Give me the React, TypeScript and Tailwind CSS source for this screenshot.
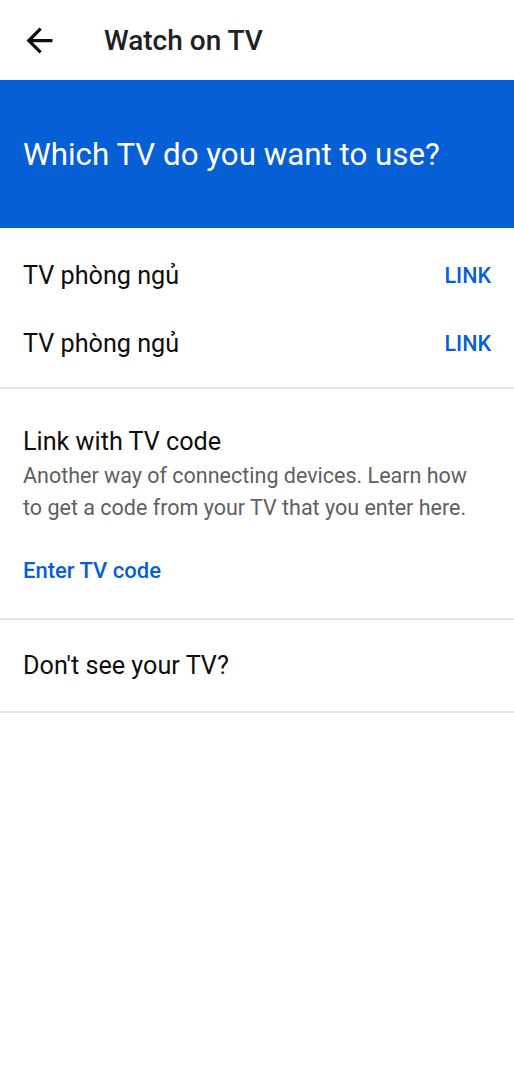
const tvs = ["TV phòng ngủ", "TV phòng ngủ"];

export default function App() {
  return (
    <div className="min-h-[1080px] bg-white font-['Roboto',sans-serif] text-[#0f0f0f]">
      {/* Top bar */}
      <header className="flex h-[80px] items-center">
        <button className="ml-[20px] flex h-[39px] w-[39px] items-center justify-center text-[#0f0f0f]">
          <svg viewBox="0 0 24 24" className="h-[39px] w-[39px]" fill="currentColor">
            <path d="M20 11H7.83l5.59-5.59L12 4l-8 8 8 8 1.41-1.41L7.83 13H20v-2z" />
          </svg>
        </button>
        <h1 className="ml-[45px] mt-[2px] text-[28px] font-medium leading-none text-[#212121]">Watch on TV</h1>
      </header>

      {/* Banner */}
      <div className="flex h-[148px] items-center bg-[#065fd4] px-[23px]">
        <h2 className="mt-[2px] text-[31.3px] leading-none text-white">Which TV do you want to use?</h2>
      </div>

      {/* Available TVs */}
      <div className="pt-[14px] pb-[9px]">
        {tvs.map((tv, i) => (
          <div key={i} className="flex h-[68px] items-center justify-between px-[23px]">
            <span className="text-[25.2px] leading-none">{tv}</span>
            <span className="text-[21.5px] font-medium leading-none text-[#065fd4]">LINK</span>
          </div>
        ))}
      </div>
      <div className="h-[2px] bg-[#e5e5e5]" />

      {/* Link with code */}
      <div className="px-[23px] pt-[36px] pb-[35px]">
        <p className="text-[25.2px] leading-[34px]">Link with TV code</p>
        <p className="mt-[1px] text-[21.5px] leading-[32px] text-[#606060]">
          Another way of connecting devices. Learn how to get a code from your TV that you enter here.
        </p>
        <p className="mt-[35px] text-[22px] font-medium leading-[24px] text-[#065fd4]">Enter TV code</p>
      </div>
      <div className="h-[2px] bg-[#e5e5e5]" />

      <div className="flex h-[91px] items-center px-[23px]">
        <span className="text-[25.2px] leading-none">Don't see your TV?</span>
      </div>
      <div className="h-[2px] bg-[#e5e5e5]" />
    </div>
  );
}
